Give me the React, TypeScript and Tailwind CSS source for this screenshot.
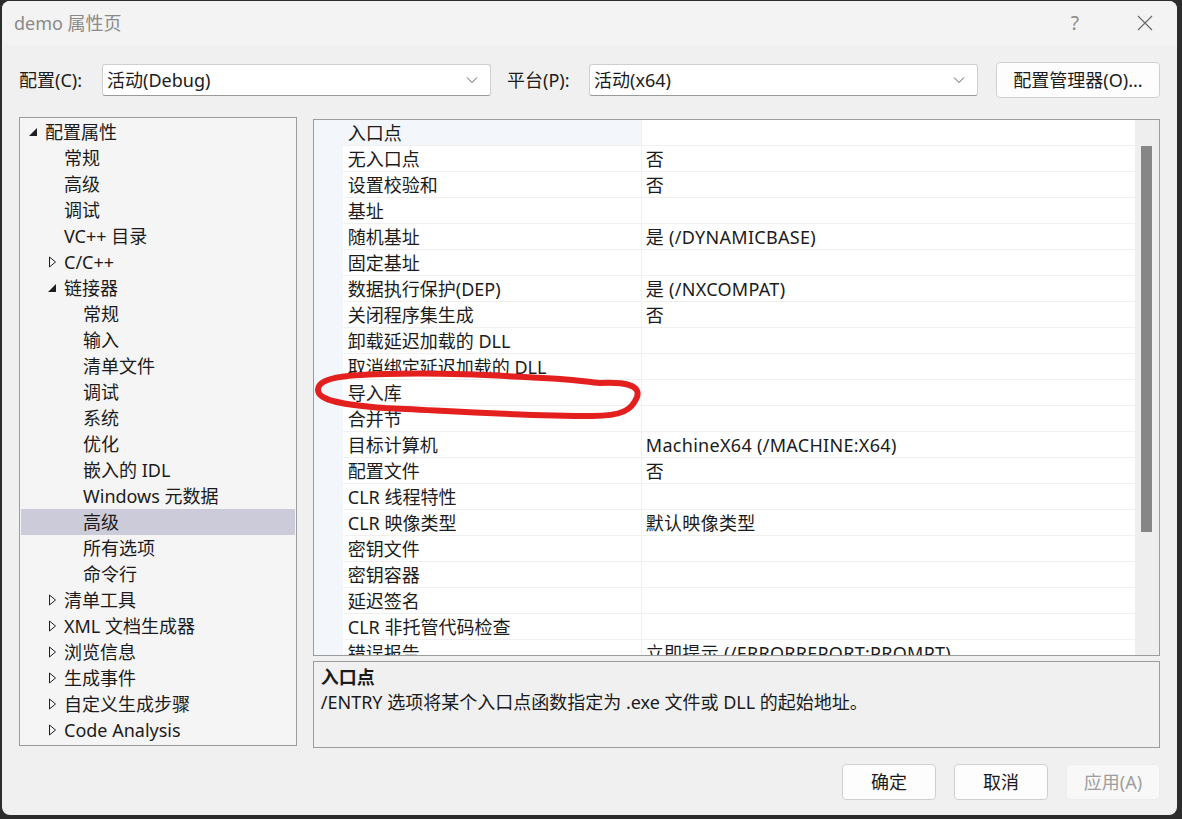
import React from 'react';

const FONT = { fontFamily: '"Noto Sans", "Noto Sans CJK SC", sans-serif' };

type Node = { label: string; level: number; arrow?: 'open' | 'closed'; selected?: boolean };

const tree: Node[] = [
  { label: '配置属性', level: 0, arrow: 'open' },
  { label: '常规', level: 1 },
  { label: '高级', level: 1 },
  { label: '调试', level: 1 },
  { label: 'VC++ 目录', level: 1 },
  { label: 'C/C++', level: 1, arrow: 'closed' },
  { label: '链接器', level: 1, arrow: 'open' },
  { label: '常规', level: 2 },
  { label: '输入', level: 2 },
  { label: '清单文件', level: 2 },
  { label: '调试', level: 2 },
  { label: '系统', level: 2 },
  { label: '优化', level: 2 },
  { label: '嵌入的 IDL', level: 2 },
  { label: 'Windows 元数据', level: 2 },
  { label: '高级', level: 2, selected: true },
  { label: '所有选项', level: 2 },
  { label: '命令行', level: 2 },
  { label: '清单工具', level: 1, arrow: 'closed' },
  { label: 'XML 文档生成器', level: 1, arrow: 'closed' },
  { label: '浏览信息', level: 1, arrow: 'closed' },
  { label: '生成事件', level: 1, arrow: 'closed' },
  { label: '自定义生成步骤', level: 1, arrow: 'closed' },
  { label: 'Code Analysis', level: 1, arrow: 'closed' },
];

const rows: [string, string][] = [
  ['入口点', ''],
  ['无入口点', '否'],
  ['设置校验和', '否'],
  ['基址', ''],
  ['随机基址', '是 (/DYNAMICBASE)'],
  ['固定基址', ''],
  ['数据执行保护(DEP)', '是 (/NXCOMPAT)'],
  ['关闭程序集生成', '否'],
  ['卸载延迟加载的 DLL', ''],
  ['取消绑定延迟加载的 DLL', ''],
  ['导入库', ''],
  ['合并节', ''],
  ['目标计算机', 'MachineX64 (/MACHINE:X64)'],
  ['配置文件', '否'],
  ['CLR 线程特性', ''],
  ['CLR 映像类型', '默认映像类型'],
  ['密钥文件', ''],
  ['密钥容器', ''],
  ['延迟签名', ''],
  ['CLR 非托管代码检查', ''],
  ['错误报告', '立即提示 (/ERRORREPORT:PROMPT)'],
];

function Arrow({ kind }: { kind?: 'open' | 'closed' }) {
  if (kind === 'open')
    return (
      <svg width="10" height="10" viewBox="0 0 10 10" className="ml-[2px]">
        <path d="M9 1 L9 9 L1 9 Z" fill="#1f1f1f" />
      </svg>
    );
  if (kind === 'closed')
    return (
      <svg width="9" height="12" viewBox="0 0 9 12" className="ml-[3px]">
        <path d="M1.5 1 L7.5 6 L1.5 11 Z" fill="none" stroke="#1f1f1f" strokeWidth="1" />
      </svg>
    );
  return null;
}

function Combo({ value }: { value: string }) {
  return (
    <div className="w-[389px] h-[32px] bg-white border border-[#cfcfcf] border-b-[#9a9a9a] rounded-[3px] flex items-center justify-between pl-[4px] pr-[12px] text-[18px] text-[#1b1b1b]">
      <span>{value}</span>
      <svg width="12" height="8" viewBox="0 0 12 8">
        <path d="M1 1.5 L6 6.5 L11 1.5" fill="none" stroke="#5a5a5a" strokeWidth="1" />
      </svg>
    </div>
  );
}

function Btn({ children, disabled, w }: { children: React.ReactNode; disabled?: boolean; w: string }) {
  return (
    <div
      className={
        disabled
          ? `${w} h-[36px] rounded-[4px] border border-[#ececec] bg-[#f8f8f8] text-[#9e9e9e] flex items-center justify-center text-[18px]`
          : `${w} h-[36px] rounded-[4px] border border-[#d0d0d0] bg-[#fdfdfd] text-[#1b1b1b] flex items-center justify-center text-[18px]`
      }
    >
      {children}
    </div>
  );
}

export default function App() {
  return (
    <div style={FONT} className="w-[1182px] h-[819px] bg-[#2c2c2c] pl-[2px] pt-[1px] pr-[5px] pb-[4px] flex relative overflow-hidden">
      <div className="flex-1 flex flex-col rounded-[8px] overflow-hidden bg-[#f0f0f0]">
        {/* Title bar */}
        <div className="h-[44px] bg-[#f3f3f3] flex items-center justify-between pl-[12px] pr-[24px] text-[18px]">
          <span className="text-[#8a8a8a]">demo 属性页</span>
          <div className="flex items-center gap-[58px]">
            <span className="text-[#8a8a8a] text-[19px]">?</span>
            <svg width="16" height="16" viewBox="0 0 16 16">
              <path d="M1 1 L15 15 M15 1 L1 15" stroke="#6a6a6a" strokeWidth="1.2" />
            </svg>
          </div>
        </div>

        <div className="flex-1 flex flex-col px-[17px] pt-[17px]">
          {/* Config row */}
          <div className="h-[36px] flex items-center text-[18px] text-[#1b1b1b]">
            <span className="w-[83px]">配置(C):</span>
            <Combo value="活动(Debug)" />
            <span className="w-[82px] ml-[16px]">平台(P):</span>
            <Combo value="活动(x64)" />
            <div className="ml-[18px]">
              <Btn w="w-[164px]">配置管理器(O)...</Btn>
            </div>
          </div>

          <div className="flex mt-[19px] gap-[16px]">
            {/* Tree */}
            <div className="w-[278px] h-[629px] border border-[#9c9c9c] bg-[#f5f5f5] pt-[1px] px-[1px] text-[18px] text-[#1b1b1b]">
              {tree.map((n, i) => (
                <div
                  key={i}
                  className={`h-[26px] flex items-center ${n.selected ? 'bg-[#cccbd9]' : ''}`}
                  style={{ paddingLeft: 5 + n.level * 19 }}
                >
                  <div className="w-[19px] flex items-center">
                    <Arrow kind={n.arrow} />
                  </div>
                  <span className="whitespace-nowrap leading-[26px]">{n.label}</span>
                </div>
              ))}
            </div>

            {/* Right column */}
            <div className="w-[848px] pt-[2px] flex flex-col gap-[5px]">
              <div className="h-[537px] border border-[#9c9c9c] bg-white flex overflow-hidden">
                <div className="flex-1 flex flex-col overflow-hidden">
                  {rows.map(([k, v], i) => (
                    <div key={i} className="h-[26px] shrink-0 flex text-[18px] text-[#1b1b1b]">
                      <div className="w-[29px] bg-[#f3f6fb]" />
                      <div
                        className={`w-[299px] h-full border-b border-r border-[#f0f0f0] pl-[5px] pt-[2px] flex items-center whitespace-nowrap ${
                          i === 0 ? 'bg-[#f3f6fb]' : ''
                        }`}
                      >
                        {k}
                      </div>
                      <div className="flex-1 h-full border-b border-[#f0f0f0] pl-[4px] pt-[2px] flex items-center whitespace-nowrap tracking-[0.3px]">
                        {v}
                      </div>
                    </div>
                  ))}
                </div>
                {/* Scrollbar */}
                <div className="w-[24px] bg-[#eeeeee] pt-[26px] pl-[6px]">
                  <div className="w-[11px] h-[386px] bg-[#868686]" />
                </div>
              </div>

              <div className="h-[87px] border border-[#9c9c9c] bg-[#f0f0f0] pl-[7px] pt-[3px] text-[18px] text-[#1b1b1b]">
                <div className="h-[25px] leading-[25px] font-bold">入口点</div>
                <div className="h-[25px] leading-[25px]">/ENTRY 选项将某个入口点函数指定为 .exe 文件或 DLL 的起始地址。</div>
              </div>
            </div>
          </div>

          {/* Buttons */}
          <div className="flex justify-end gap-[18px] mt-[16px]">
            <Btn w="w-[94px]">确定</Btn>
            <Btn w="w-[94px]">取消</Btn>
            <Btn w="w-[94px]" disabled>
              应用(A)
            </Btn>
          </div>
        </div>
      </div>

      {/* Red hand-drawn annotation */}
      <svg className="absolute left-0 top-0 pointer-events-none" width="1182" height="819">
        <path
          d="M600 383 C625 382 641 385 637 397 C632 410 622 416 592 416 C520 416 450 411 385 408 C345 405 318 401 318 390 C318 378 342 375 385 374 C445 372 505 376 560 379 C578 380 588 382 600 383"
          fill="none"
          stroke="#e3201e"
          strokeWidth="6"
          strokeLinecap="round"
        />
      </svg>
    </div>
  );
}
